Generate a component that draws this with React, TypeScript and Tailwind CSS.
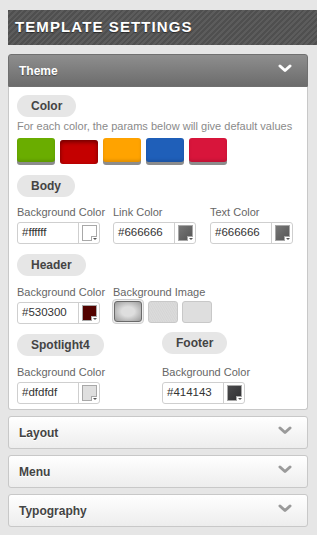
import React from "react";

const font = { fontFamily: '"Liberation Sans", Arial, Helvetica, sans-serif' };

function Chevron({ color }: { color: string }) {
  return (
    <svg width="14" height="9" viewBox="0 0 14 9" className="-mt-[4px]">
      <polyline points="2,2 7,6.5 12,2" fill="none" stroke={color} strokeWidth="3" strokeLinecap="round" strokeLinejoin="round" />
    </svg>
  );
}

function Pill({ children }: { children: React.ReactNode }) {
  return (
    <div className="inline-flex h-[22px] items-center rounded-full bg-[#e6e6e6] px-[14px] text-[12px] font-bold text-[#444] self-start">
      {children}
    </div>
  );
}

function Label({ children }: { children: React.ReactNode }) {
  return <div className="text-[11px] leading-[14px] text-[#666] whitespace-nowrap">{children}</div>;
}

function ColorInput({ value, fill }: { value: string; fill: string }) {
  return (
    <div className="flex h-[22px] w-[83px] rounded-[3px] border border-[#cfcfcf] bg-white">
      <div className="flex flex-1 items-center pl-[4px] text-[11.5px] text-[#333]">{value}</div>
      <div className="relative w-[21px] border-l border-[#cfcfcf]">
        <div
          className="absolute left-[3px] top-[2px] h-[16px] w-[15px] border border-[#a8a8a8]"
          style={{ background: fill }}
        >
          <div className="absolute bottom-[-1px] right-[-1px] flex h-[5px] w-[6px] items-end justify-center border-l border-t border-[#a8a8a8] bg-white pb-[1px]">
            <div className="h-0 w-0 border-x-[2px] border-t-[2px] border-x-transparent border-t-[#555]" />
          </div>
        </div>
      </div>
    </div>
  );
}

function Swatch({ color, active }: { color: string; active?: boolean }) {
  if (active) {
    return (
      <div
        className="mt-[2px] h-[24px] w-[38px] rounded-[3px] shadow-[inset_0_2px_4px_rgba(0,0,0,0.45)]"
        style={{ background: color }}
      />
    );
  }
  return (
    <div
      className="h-[24px] w-[38px] rounded-[3px] shadow-[0_3px_0_#8c8c8c,inset_0_-2px_3px_rgba(0,0,0,0.12)]"
      style={{ background: color }}
    />
  );
}

function Collapsed({ title }: { title: string }) {
  return (
    <div className="mt-[6px] flex h-[33px] w-[300px] items-center justify-between rounded-[3px] border border-[#c8c8c8] bg-[linear-gradient(#ffffff,#ededed)] pl-[10px] pr-[15px]">
      <span className="text-[12px] font-bold text-[#444] [text-shadow:0_1px_0_#fff]">{title}</span>
      <Chevron color="#9a9a9a" />
    </div>
  );
}

export default function App() {
  return (
    <div className="h-[535px] w-[317px] overflow-hidden bg-[#e6e6e6] pt-[10px]" style={font}>
      <div className="ml-[8px] flex h-[35px] items-center bg-[repeating-linear-gradient(135deg,#4f4f4f_0px,#4f4f4f_2px,#5c5c5c_2px,#5c5c5c_4px)] pl-[7px]">
        <span className="text-[15px] font-bold tracking-[1.1px] text-white [text-shadow:0_1px_1px_rgba(0,0,0,0.5)]">
          TEMPLATE SETTINGS
        </span>
      </div>

      <div className="ml-[8px] mt-[9px] w-[300px]">
        <div className="flex h-[33px] items-center justify-between rounded-t-[3px] border border-[#707070] bg-[linear-gradient(#8e8e8e,#6c6c6c)] pl-[10px] pr-[15px]">
          <span className="text-[12px] font-bold text-white [text-shadow:0_1px_1px_rgba(0,0,0,0.4)]">Theme</span>
          <Chevron color="#ffffff" />
        </div>
        <div className="flex flex-col rounded-b-[3px] border border-t-0 border-[#c8c8c8] bg-white px-[8px] pb-[5px] pt-[8px]">
          <Pill>Color</Pill>
          <div className="mt-[2px] text-[11px] leading-[14px] text-[#8a8a8a] whitespace-nowrap">
            For each color, the params below will give default values
          </div>
          <div className="mt-[5px] flex h-[27px] items-start gap-[5px]">
            <Swatch color="#6aad00" />
            <Swatch color="#c40000" active />
            <Swatch color="#ffa300" />
            <Swatch color="#1f5fb9" />
            <Swatch color="#d8153b" />
          </div>

          <div className="mt-[10px] flex">
            <Pill>Body</Pill>
          </div>
          <div className="mt-[8px] flex">
            <div className="w-[96px]">
              <Label>Background Color</Label>
              <div className="mt-[3px]"><ColorInput value="#ffffff" fill="#ffffff" /></div>
            </div>
            <div className="w-[97px]">
              <Label>Link Color</Label>
              <div className="mt-[3px]"><ColorInput value="#666666" fill="linear-gradient(135deg,#777,#555)" /></div>
            </div>
            <div>
              <Label>Text Color</Label>
              <div className="mt-[3px]"><ColorInput value="#666666" fill="linear-gradient(135deg,#777,#555)" /></div>
            </div>
          </div>

          <div className="mt-[10px] flex">
            <Pill>Header</Pill>
          </div>
          <div className="mt-[9px] flex">
            <div className="w-[96px]">
              <Label>Background Color</Label>
              <div className="mt-[3px]"><ColorInput value="#530300" fill="#530300" /></div>
            </div>
            <div>
              <Label>Background Image</Label>
              <div className="flex h-[25px] items-center gap-[4px]">
                <div className="-ml-[1px] flex h-[25px] w-[32px] items-center justify-center rounded-[4px] border border-[#cfcfcf] bg-[#eee]">
                  <div className="h-[21px] w-[28px] rounded-[3px] border border-[#6a6a6a] bg-[radial-gradient(ellipse_at_center,#dedede_35%,#9a9a9a_100%)]" />
                </div>
                <div className="h-[22px] w-[30px] rounded-[3px] border border-[#c8c8c8] bg-[repeating-linear-gradient(60deg,#d6d6d6_0px,#dcdcdc_1px,#d4d4d4_2px)]" />
                <div className="h-[22px] w-[30px] rounded-[3px] border border-[#c8c8c8] bg-[#dedede]" />
              </div>
            </div>
          </div>

          <div className="mt-[8px] flex">
            <div className="w-[145px]">
              <Pill>Spotlight4</Pill>
            </div>
            <Pill>Footer</Pill>
          </div>
          <div className="mt-[9px] flex">
            <div className="w-[145px]">
              <Label>Background Color</Label>
              <div className="mt-[3px]"><ColorInput value="#dfdfdf" fill="#dfdfdf" /></div>
            </div>
            <div>
              <Label>Background Color</Label>
              <div className="mt-[3px]"><ColorInput value="#414143" fill="linear-gradient(135deg,#4a4a4c,#303032)" /></div>
            </div>
          </div>
        </div>

        <Collapsed title="Layout" />
        <Collapsed title="Menu" />
        <Collapsed title="Typography" />
      </div>
    </div>
  );
}
